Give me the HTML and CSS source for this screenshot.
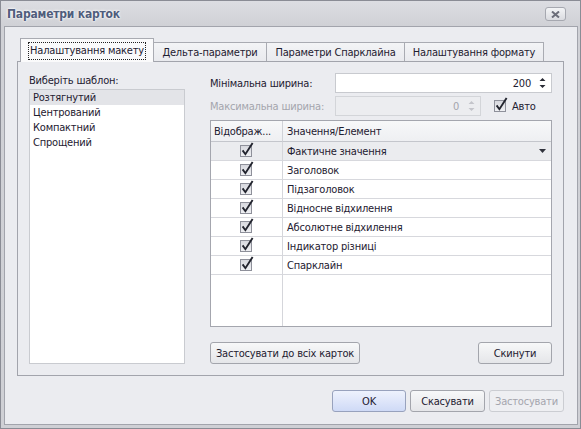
FILE: index.html
```html
<!DOCTYPE html>
<html lang="uk">
<head>
<meta charset="utf-8">
<title>Параметри карток</title>
<link rel="stylesheet" href="styles.css">
</head>
<body>
<div class="window">
  <div class="titlebar">
    <span class="title">Параметри карток</span>
    <div class="close">
      <svg width="9" height="7" viewBox="0 0 9 7"><path d="M1 0.5 L8 6.5 M8 0.5 L1 6.5" stroke="#6c6e7a" stroke-width="2"/></svg>
    </div>
  </div>
  <div class="client">
    <div class="tabstrip">
      <div class="tab active t1"><span class="focus">Налаштування макету</span></div>
      <div class="tab t2">Дельта-параметри</div>
      <div class="tab t3">Параметри Спарклайна</div>
      <div class="tab t4">Налаштування формату</div>
    </div>
    <div class="panel">
      <div class="leftcol">
        <div class="caption">Виберіть шаблон:</div>
        <div class="listbox">
          <div class="item selected">Розтягнутий</div>
          <div class="item">Центрований</div>
          <div class="item">Компактний</div>
          <div class="item">Спрощений</div>
        </div>
      </div>
      <div class="rightcol">
        <div class="field">
          <span class="flabel">Мінімальна ширина:</span>
          <div class="spin wide">
            <span class="value">200</span>
            <span class="arrows">
              <svg width="7" height="12" viewBox="0 0 7 12"><path d="M0.5 4 L3.5 1 L6.5 4 Z M0.5 8 L3.5 11 L6.5 8 Z" fill="#2a2c36"/></svg>
            </span>
          </div>
        </div>
        <div class="field second">
          <span class="flabel disabled">Максимальна ширина:</span>
          <div class="spin narrow off">
            <span class="value">0</span>
            <span class="arrows">
              <svg width="7" height="12" viewBox="0 0 7 12"><path d="M0.5 4 L3.5 1 L6.5 4 Z M0.5 8 L3.5 11 L6.5 8 Z" fill="#c4c5cb"/></svg>
            </span>
          </div>
          <label class="auto">
            <svg class="chk" width="15" height="15" viewBox="0 0 15 15"><defs><linearGradient id="cg" x1="0" y1="0" x2="0" y2="1"><stop offset="0" stop-color="#d6d7dd"/><stop offset="1" stop-color="#f0f1f4"/></linearGradient></defs><rect x="0.5" y="3.5" width="11" height="11" fill="url(#cg)" stroke="#8e909a"/><path d="M2.6 8.4 L5.4 12.2 L12.6 1" fill="none" stroke="#22242e" stroke-width="1.9"/></svg>
            <span>Авто</span>
          </label>
        </div>
        <div class="grid">
          <div class="hcell c1">Відображ...</div>
          <div class="hcell">Значення/Елемент</div>

          <div class="cell c1 focused"><svg class="chk" width="15" height="15" viewBox="0 0 15 15"><rect x="0.5" y="3.5" width="11" height="11" fill="url(#cg)" stroke="#8e909a"/><path d="M2.6 8.4 L5.4 12.2 L12.6 1" fill="none" stroke="#22242e" stroke-width="1.9"/></svg></div>
          <div class="cell focused text"><span>Фактичне значення</span><svg width="7" height="4" viewBox="0 0 7 4"><path d="M0 0 L7 0 L3.5 4 Z" fill="#30323c"/></svg></div>

          <div class="cell c1"><svg class="chk" width="15" height="15" viewBox="0 0 15 15"><rect x="0.5" y="3.5" width="11" height="11" fill="url(#cg)" stroke="#8e909a"/><path d="M2.6 8.4 L5.4 12.2 L12.6 1" fill="none" stroke="#22242e" stroke-width="1.9"/></svg></div>
          <div class="cell text">Заголовок</div>

          <div class="cell c1"><svg class="chk" width="15" height="15" viewBox="0 0 15 15"><rect x="0.5" y="3.5" width="11" height="11" fill="url(#cg)" stroke="#8e909a"/><path d="M2.6 8.4 L5.4 12.2 L12.6 1" fill="none" stroke="#22242e" stroke-width="1.9"/></svg></div>
          <div class="cell text">Підзаголовок</div>

          <div class="cell c1"><svg class="chk" width="15" height="15" viewBox="0 0 15 15"><rect x="0.5" y="3.5" width="11" height="11" fill="url(#cg)" stroke="#8e909a"/><path d="M2.6 8.4 L5.4 12.2 L12.6 1" fill="none" stroke="#22242e" stroke-width="1.9"/></svg></div>
          <div class="cell text">Відносне відхилення</div>

          <div class="cell c1"><svg class="chk" width="15" height="15" viewBox="0 0 15 15"><rect x="0.5" y="3.5" width="11" height="11" fill="url(#cg)" stroke="#8e909a"/><path d="M2.6 8.4 L5.4 12.2 L12.6 1" fill="none" stroke="#22242e" stroke-width="1.9"/></svg></div>
          <div class="cell text">Абсолютне відхилення</div>

          <div class="cell c1"><svg class="chk" width="15" height="15" viewBox="0 0 15 15"><rect x="0.5" y="3.5" width="11" height="11" fill="url(#cg)" stroke="#8e909a"/><path d="M2.6 8.4 L5.4 12.2 L12.6 1" fill="none" stroke="#22242e" stroke-width="1.9"/></svg></div>
          <div class="cell text">Індикатор різниці</div>

          <div class="cell c1"><svg class="chk" width="15" height="15" viewBox="0 0 15 15"><rect x="0.5" y="3.5" width="11" height="11" fill="url(#cg)" stroke="#8e909a"/><path d="M2.6 8.4 L5.4 12.2 L12.6 1" fill="none" stroke="#22242e" stroke-width="1.9"/></svg></div>
          <div class="cell text">Спарклайн</div>

          <div class="filler c1"></div>
          <div class="filler"></div>
        </div>
        <div class="actions">
          <button class="btn apply-all">Застосувати до всіх карток</button>
          <button class="btn reset">Скинути</button>
        </div>
      </div>
    </div>
    <div class="footer">
      <button class="btn ok">OK</button>
      <button class="btn cancel">Скасувати</button>
      <button class="btn applybtn" disabled>Застосувати</button>
    </div>
  </div>
</div>
</body>
</html>
```
FILE: styles.css
```css
* { box-sizing: border-box; }
html, body { margin: 0; padding: 0; }
body {
  width: 581px;
  height: 429px;
  overflow: hidden;
  background: #d3d4d9;
  font-family: "DejaVu Sans", "Liberation Sans", sans-serif;
  font-stretch: condensed;
  font-size: 11px;
  letter-spacing: -0.2px;
  color: #1e2030;
}
.window {
  width: 581px;
  height: 429px;
  border: 1px solid #8a8c95;
  background: linear-gradient(#dcdde2, #d0d1d6 25px, #cfd0d5);
  padding: 0 2px 3px 3px;
  display: flex;
  flex-direction: column;
}
.titlebar {
  height: 25px;
  flex: none;
  display: flex;
  align-items: center;
  justify-content: space-between;
  padding: 1px 12px 0 3px;
}
.title {
  font-weight: bold;
  font-size: 12px;
  color: #505d7c;
  text-shadow: 0 0 3px #ffffff, 0 0 2px #ffffff;
}
.close {
  width: 21px;
  height: 14px;
  border: 1px solid #a6a8b0;
  border-radius: 3px;
  background: linear-gradient(#f3f4f6, #dadbe0);
  display: flex;
  align-items: center;
  justify-content: center;
}
.client {
  flex: 1;
  border: 1px solid #a2a4ac;
  background: #ebecf0;
  display: flex;
  flex-direction: column;
  padding: 11px 13px 12px 12px;
}
.tabstrip {
  flex: none;
  height: 24px;
  margin-bottom: -1px;
  display: flex;
  align-items: flex-end;
  padding-left: 3px;
  position: relative;
  z-index: 1;
}
.tab {
  height: 19px;
  margin-bottom: 1px;
  border: 1px solid #a9abb2;
  border-bottom: none;
  border-left: none;
  background: linear-gradient(#f3f4f6, #e9eaee);
  display: flex;
  align-items: center;
  justify-content: center;
  white-space: nowrap;
}
.t1 { width: 134px; }
.t2 { width: 113px; }
.t3 { width: 138px; }
.t4 { width: 139px; }
.tab.active {
  height: 24px;
  margin-bottom: 0;
  border-left: 1px solid #a2a4ac;
  background: #fafafb;
  align-items: flex-start;
  padding-top: 4px;
}
.focus {
  outline: 1px dotted #222;
  outline-offset: 0;
  line-height: 16px;
  padding: 0 1px;
}
.panel {
  flex: none;
  height: 315px;
  border: 1px solid #a2a4ac;
  background: #ebecf0;
  display: flex;
  gap: 25px;
  padding: 11px;
}
.leftcol {
  width: 156px;
  flex: none;
  display: flex;
  flex-direction: column;
}
.caption {
  height: 16px;
  line-height: 16px;
}
.listbox {
  flex: 1;
  background: #ffffff;
  border: 1px solid #c9cbd0;
}
.item {
  height: 15px;
  line-height: 15px;
  padding-left: 3px;
}
.item.selected { background: #e3e4e8; }
.rightcol {
  flex: 1;
  display: flex;
  flex-direction: column;
}
.field {
  height: 20px;
  flex: none;
  display: flex;
  align-items: center;
}
.field.second { margin-top: 3px; }
.flabel { width: 125px; flex: none; }
.flabel.disabled { color: #a4a5ad; }
.spin {
  height: 20px;
  display: flex;
  align-items: center;
  background: #ffffff;
  border: 1px solid #c8cacf;
}
.spin.wide { flex: 1; }
.spin.narrow { width: 146px; }
.spin.off { background: #ecedf0; border-color: #d3d5d9; color: #a4a5ad; }
.value {
  flex: 1;
  text-align: right;
  padding-right: 3px;
}
.arrows {
  width: 17px;
  display: flex;
  justify-content: center;
  align-items: center;
}
.spin.off .arrows { width: 18px; }
.auto {
  display: flex;
  align-items: center;
  margin-left: 13px;
  gap: 3px;
}
.auto .chk { margin-top: -4px; }
.grid {
  flex: none;
  height: 207px;
  margin-top: 4px;
  background: #ffffff;
  border: 1px solid #a4a6ae;
  display: grid;
  grid-template-columns: 72px 1fr;
  grid-template-rows: 21px repeat(7, 19px) 1fr;
}
.hcell {
  background: linear-gradient(#f7f8f9, #eeeff2);
  border-bottom: 1px solid #c4c6cc;
  padding-left: 4px;
  display: flex;
  align-items: center;
  white-space: nowrap;
  overflow: hidden;
}
.hcell.c1 { padding-left: 3px; }
.c1 { border-right: 1px solid #d5d6db; }
.hcell.c1 { border-right-color: #d0d2d7; }
.cell {
  border-bottom: 1px solid #d7d8dd;
  display: flex;
  align-items: center;
  white-space: nowrap;
  overflow: hidden;
}
.cell.c1 { justify-content: center; padding-left: 2px; }
.cell.c1 .chk { margin-top: -3px; }
.cell.text { padding-left: 4px; justify-content: space-between; padding-right: 5px; }
.cell.focused { background: #ebecef; }
.actions {
  flex: none;
  margin-top: 15px;
  display: flex;
  justify-content: space-between;
}
.btn {
  height: 22px;
  font: inherit;
  letter-spacing: inherit;
  color: #1e2030;
  border: 1px solid #a3a5ac;
  border-radius: 3px;
  background: linear-gradient(#f7f8f9, #e5e6e9);
  padding: 0;
  margin: 0;
}
.apply-all { width: 150px; }
.reset { width: 74px; }
.footer {
  flex: none;
  margin-top: 14px;
  display: flex;
  justify-content: flex-end;
  gap: 4px;
}
.ok { width: 74px; background: linear-gradient(#eef2fd, #cfdaf6); border-color: #98a2bd; }
.cancel { width: 75px; }
.applybtn { width: 75px; color: #a4a5ad; border-color: #cbcdd2; background: #eeeff2; }
```
